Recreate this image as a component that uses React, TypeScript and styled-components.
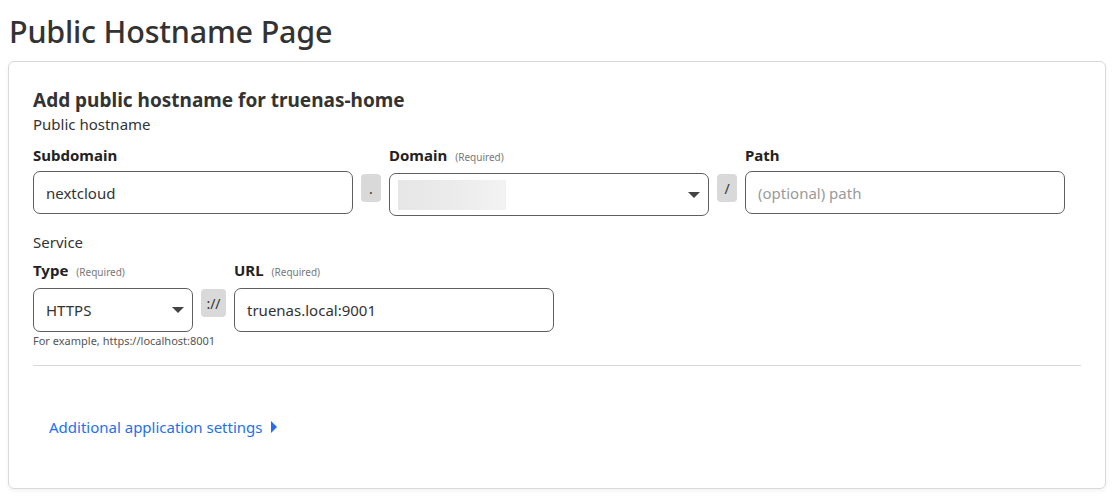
import React from "react";
import styled, { createGlobalStyle } from "styled-components";

const Global = createGlobalStyle`
  html, body { margin: 0; padding: 0; background: #fff; }
  body {
    padding: 8px;
    font-family: "Noto Sans", "Open Sans", sans-serif;
    color: #333;
  }
`;

const Title = styled.h1`
  margin: 0 0 0 1px;
  font-size: 30.5px;
  line-height: 46px;
  font-weight: 500;
  color: #333;
  letter-spacing: -0.2px;
`;

const Card = styled.section`
  margin-top: 7px;
  width: 1098px;
  box-sizing: border-box;
  border: 1px solid #d9d9d9;
  border-radius: 6px;
  background: #fff;
  box-shadow: 0 2px 4px rgba(0, 0, 0, 0.05);
  padding: 25px 24px 50px 24px;
`;

const Heading = styled.h2`
  margin: 0;
  font-size: 19px;
  line-height: 26px;
  font-weight: 700;
  color: #333;
`;

const SectionLabel = styled.div<{ $top?: number }>`
  font-size: 15px;
  line-height: 20px;
  margin-top: ${(p) => p.$top ?? 1}px;
  color: #333;
`;

const Row = styled.div<{ $top: number }>`
  display: flex;
  align-items: flex-start;
  margin-top: ${(p) => p.$top}px;
`;

const Field = styled.div<{ $w: number }>`
  display: flex;
  flex-direction: column;
  width: ${(p) => p.$w}px;
`;

const Label = styled.div`
  display: flex;
  align-items: baseline;
  gap: 8px;
  font-size: 15px;
  font-weight: 700;
  line-height: 20px;
  color: #222;
  margin-bottom: 6px;
`;

const Req = styled.span`
  font-size: 10px;
  font-weight: 400;
  color: #777;
`;

const Box = styled.div<{ $h?: number }>`
  position: relative;
  box-sizing: border-box;
  height: ${(p) => p.$h ?? 43}px;
  border: 1px solid #5f5f5f;
  border-radius: 7px;
  display: flex;
  align-items: center;
  padding: 0 12px;
  font-size: 15px;
  color: #333;
`;

const Placeholder = styled.span`
  color: #9a9a9a;
`;

const Addon = styled.div<{ $w: number }>`
  box-sizing: border-box;
  width: ${(p) => p.$w}px;
  height: 28px;
  margin: 29px 8px 0 8px;
  background: #d9d9d9;
  border-radius: 4px;
  display: flex;
  align-items: center;
  justify-content: center;
  font-size: 14px;
  color: #333;
`;

const Blur = styled.div`
  width: 108px;
  height: 30px;
  margin-left: -4px;
  background: linear-gradient(90deg, #e6e6e6 0%, #ebebeb 50%, #f3f3f3 100%);
`;

const Caret = styled.span`
  position: absolute;
  right: 8px;
  top: 50%;
  margin-top: -3px;
  width: 0;
  height: 0;
  border-left: 6px solid transparent;
  border-right: 6px solid transparent;
  border-top: 6px solid #444;
`;

const Help = styled.div`
  font-size: 11px;
  line-height: 16px;
  color: #555;
  margin-top: 1px;
  white-space: nowrap;
`;

const Divider = styled.hr`
  border: 0;
  border-top: 1px solid #d9d9d9;
  margin: 16px 0 0 0;
`;

const Link = styled.a`
  display: inline-flex;
  align-items: center;
  gap: 8px;
  margin: 51px 0 0 16px;
  font-size: 15px;
  line-height: 20px;
  color: #1f6fef;
  text-decoration: none;
  cursor: pointer;
`;

const LinkCaret = styled.span`
  width: 0;
  height: 0;
  border-top: 6px solid transparent;
  border-bottom: 6px solid transparent;
  border-left: 6px solid #1f6fef;
`;

export default function App() {
  return (
    <>
      <Global />
      <Title>Public Hostname Page</Title>
      <Card>
        <Heading>Add public hostname for truenas-home</Heading>
        <SectionLabel>Public hostname</SectionLabel>
        <Row $top={11}>
          <Field $w={320}>
            <Label>Subdomain</Label>
            <Box>nextcloud</Box>
          </Field>
          <Addon $w={20}>.</Addon>
          <Field $w={320}>
            <Label>
              Domain <Req>(Required)</Req>
            </Label>
            <Box>
              <Blur />
              <Caret />
            </Box>
          </Field>
          <Addon $w={20}>/</Addon>
          <Field $w={320}>
            <Label>Path</Label>
            <Box>
              <Placeholder>(optional) path</Placeholder>
            </Box>
          </Field>
        </Row>
        <SectionLabel $top={16}>Service</SectionLabel>
        <Row $top={8}>
          <Field $w={160}>
            <Label>
              Type <Req>(Required)</Req>
            </Label>
            <Box $h={44}>
              HTTPS
              <Caret />
            </Box>
            <Help>For example, https://localhost:8001</Help>
          </Field>
          <Addon $w={25}>://</Addon>
          <Field $w={320}>
            <Label>
              URL <Req>(Required)</Req>
            </Label>
            <Box $h={44}>truenas.local:9001</Box>
          </Field>
        </Row>
        <Divider />
        <Link>
          Additional application settings <LinkCaret />
        </Link>
      </Card>
    </>
  );
}
